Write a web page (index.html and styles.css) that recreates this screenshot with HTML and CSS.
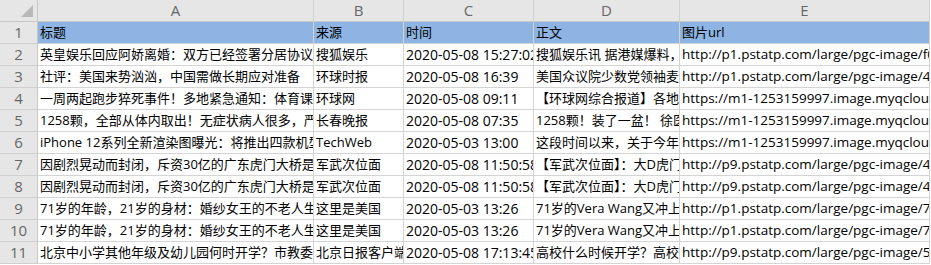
FILE: index.html
```html
<!DOCTYPE html>
<html lang="zh-CN">
<head>
  <meta charset="UTF-8">
  <title>新闻数据</title>
  <link rel="stylesheet" href="styles.css">
</head>
<body>

<!-- Sheet grid -->
<div class="sheet">
  <div class="corner"><span class="tri"></span></div>
  <div class="col-head">A</div>
  <div class="col-head">B</div>
  <div class="col-head">C</div>
  <div class="col-head">D</div>
  <div class="col-head">E</div>
  <div class="col-head blank"></div>

  <div class="row-head">1</div>
  <div class="cell title">标题</div>
  <div class="cell title">来源</div>
  <div class="cell title">时间</div>
  <div class="cell title">正文</div>
  <div class="cell title">图片url</div>
  <div class="cell title edge"></div>

  <div class="row-head">2</div>
  <div class="cell">英皇娱乐回应阿娇离婚：双方已经签署分居协议</div>
  <div class="cell">搜狐娱乐</div>
  <div class="cell date">2020-05-08 15:27:02</div>
  <div class="cell">搜狐娱乐讯 据港媒爆料，阿娇</div>
  <div class="cell url">http://p1.pstatp.com/large/pgc-image/f0</div>
  <div class="cell edge"></div>

  <div class="row-head">3</div>
  <div class="cell">社评：美国来势汹汹，中国需做长期应对准备</div>
  <div class="cell">环球时报</div>
  <div class="cell date">2020-05-08 16:39</div>
  <div class="cell">美国众议院少数党领袖麦卡锡</div>
  <div class="cell url">http://p1.pstatp.com/large/pgc-image/4c</div>
  <div class="cell edge"></div>

  <div class="row-head">4</div>
  <div class="cell">一周两起跑步猝死事件！多地紧急通知：体育课暂停</div>
  <div class="cell">环球网</div>
  <div class="cell date">2020-05-08 09:11</div>
  <div class="cell">【环球网综合报道】各地学校</div>
  <div class="cell url">https://m1-1253159997.image.myqcloud</div>
  <div class="cell edge"></div>

  <div class="row-head">5</div>
  <div class="cell">1258颗，全部从体内取出！无症状病人很多，严重</div>
  <div class="cell">长春晚报</div>
  <div class="cell date">2020-05-08 07:35</div>
  <div class="cell">1258颗！装了一盆！ 徐医生</div>
  <div class="cell url">https://m1-1253159997.image.myqcloud</div>
  <div class="cell edge"></div>

  <div class="row-head">6</div>
  <div class="cell">iPhone 12系列全新渲染图曝光：将推出四款机型</div>
  <div class="cell">TechWeb</div>
  <div class="cell date">2020-05-03 13:00</div>
  <div class="cell">这段时间以来，关于今年新款</div>
  <div class="cell url">https://m1-1253159997.image.myqcloud</div>
  <div class="cell edge"></div>

  <div class="row-head">7</div>
  <div class="cell">因剧烈晃动而封闭，斥资30亿的广东虎门大桥是否</div>
  <div class="cell">军武次位面</div>
  <div class="cell date">2020-05-08 11:50:58</div>
  <div class="cell">【军武次位面】：大D虎门大桥</div>
  <div class="cell url">http://p9.pstatp.com/large/pgc-image/4e</div>
  <div class="cell edge"></div>

  <div class="row-head">8</div>
  <div class="cell">因剧烈晃动而封闭，斥资30亿的广东虎门大桥是否</div>
  <div class="cell">军武次位面</div>
  <div class="cell date">2020-05-08 11:50:58</div>
  <div class="cell">【军武次位面】：大D虎门大桥</div>
  <div class="cell url">http://p9.pstatp.com/large/pgc-image/4e</div>
  <div class="cell edge"></div>

  <div class="row-head">9</div>
  <div class="cell">71岁的年龄，21岁的身材：婚纱女王的不老人生</div>
  <div class="cell">这里是美国</div>
  <div class="cell date">2020-05-03 13:26</div>
  <div class="cell">71岁的Vera Wang又冲上热搜</div>
  <div class="cell url">http://p1.pstatp.com/large/pgc-image/7d</div>
  <div class="cell edge"></div>

  <div class="row-head">10</div>
  <div class="cell">71岁的年龄，21岁的身材：婚纱女王的不老人生</div>
  <div class="cell">这里是美国</div>
  <div class="cell date">2020-05-03 13:26</div>
  <div class="cell">71岁的Vera Wang又冲上热搜</div>
  <div class="cell url">http://p1.pstatp.com/large/pgc-image/7d</div>
  <div class="cell edge"></div>

  <div class="row-head">11</div>
  <div class="cell">北京中小学其他年级及幼儿园何时开学？市教委回应</div>
  <div class="cell">北京日报客户端</div>
  <div class="cell date">2020-05-08 17:13:45</div>
  <div class="cell">高校什么时候开学？高校毕业生</div>
  <div class="cell url">http://p9.pstatp.com/large/pgc-image/5a</div>
  <div class="cell edge"></div>
</div>

</body>
</html>
```

FILE: styles.css
```css
body {
  margin: 0;
  background: #ffffff;
  font-family: "Open Sans", "Noto Sans CJK SC", sans-serif;
}

.sheet {
  display: grid;
  grid-template-columns: 38px 276px 90px 130px 146px 250px 1fr;
  grid-auto-rows: 22px;
  width: 931px;
}

.sheet > div {
  box-sizing: border-box;
  overflow: hidden;
  white-space: nowrap;
}

.corner {
  position: relative;
  background: #e6e6e6;
  border-right: 1px solid #c8c8c8;
  border-bottom: 1px solid #c8c8c8;
}

.corner .tri {
  position: absolute;
  right: 4px;
  bottom: 4px;
  width: 0;
  height: 0;
  border-left: 12px solid transparent;
  border-bottom: 12px solid #b8b8b8;
}

.col-head {
  background: #e6e6e6;
  color: #666666;
  font-size: 15px;
  line-height: 21px;
  text-align: center;
  border-right: 1px solid #d0d0d0;
  border-bottom: 1px solid #c8c8c8;
}

.col-head.blank {
  background: #ffffff;
  border-right: none;
  border-bottom: none;
}

.row-head {
  background: #e6e6e6;
  color: #666666;
  font-size: 15px;
  line-height: 21px;
  text-align: center;
  border-right: 1px solid #c8c8c8;
  border-bottom: 1px solid #d0d0d0;
}

.cell {
  color: #000000;
  font-size: 13px;
  line-height: 21px;
  padding-left: 2px;
  border-right: 1px solid #d4d4d4;
  border-bottom: 1px solid #d4d4d4;
}

/* latin-only columns run a little wider, as in the sheet */
.cell.date {
  font-size: 14px;
}

.cell.url {
  font-size: 13.5px;
}

.cell.title {
  background: #8db4e2;
}

.cell.edge {
  background: #ffffff;
  border-right: none;
  border-bottom: none;
}
```
